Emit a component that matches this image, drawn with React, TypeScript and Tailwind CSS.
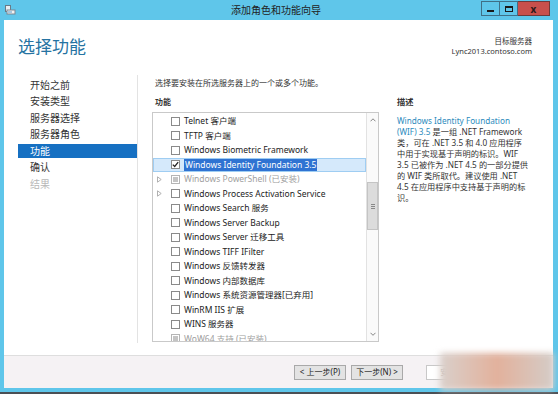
import React from "react";

type Feature = {
  label: string;
  checked?: boolean;
  selected?: boolean;
  expandable?: boolean;
  installed?: boolean;
};

const features: Feature[] = [
  { label: "Telnet 客户端" },
  { label: "TFTP 客户端" },
  { label: "Windows Biometric Framework" },
  { label: "Windows Identity Foundation 3.5", checked: true, selected: true },
  { label: "Windows PowerShell (已安装)", expandable: true, installed: true },
  { label: "Windows Process Activation Service", expandable: true },
  { label: "Windows Search 服务" },
  { label: "Windows Server Backup" },
  { label: "Windows Server 迁移工具" },
  { label: "Windows TIFF IFilter" },
  { label: "Windows 反馈转发器" },
  { label: "Windows 内部数据库" },
  { label: "Windows 系统资源管理器[已弃用]" },
  { label: "WinRM IIS 扩展" },
  { label: "WINS 服务器" },
  { label: "WoW64 支持 (已安装)", installed: true },
];

const navItems = ["开始之前", "安装类型", "服务器选择", "服务器角色", "功能", "确认", "结果"];

const descLines = [
  "3.5 已被作为 .NET 4.5 的一部分提供",
  "的 WIF 类所取代。建议使用 .NET",
  "4.5 在应用程序中支持基于声明的标",
  "识。",
];

const TitleBar = () => (
  <div className="h-[20px] flex items-start shrink-0">
    <div className="w-[77px] h-[20px] flex items-center pl-[5px]">
      <svg width="11" height="10" viewBox="0 0 11 10">
        <rect x="0.5" y="0.5" width="5" height="6" fill="#e8eef2" stroke="#6a7a86" />
        <rect x="2" y="5" width="8" height="4" fill="#f2f2f2" stroke="#7b8894" />
        <rect x="3" y="6.5" width="4" height="1" fill="#5a9ed0" />
      </svg>
    </div>
    <div className="flex-1 h-[20px] flex items-center justify-center pr-[6px] text-[10px] text-[#222]">
      添加角色和功能向导
    </div>
    <div className="w-[77px] flex items-start pt-[1px]">
      <div className="w-[19px] h-[15px] border border-[#3f6f86] flex items-end justify-center pb-[3px]">
        <div className="w-[7px] h-[2px] bg-[#1a1a1a]" />
      </div>
      <div className="w-[18px] h-[15px] border border-l-0 border-[#3f6f86] flex items-center justify-center">
        <div className="w-[8px] h-[6px] border border-t-2 border-[#1a1a1a]" />
      </div>
      <div className="w-[32px] h-[15px] bg-[#c8504c] border border-l-0 border-[#6e3a3a] flex items-center justify-center text-[10px] font-bold text-[#2b1a1a] leading-none">
        x
      </div>
    </div>
  </div>
);

const Checkbox = ({ checked, installed }: { checked?: boolean; installed?: boolean }) => (
  <div
    className={`w-[9px] h-[9px] shrink-0 border flex items-center justify-center ${
      installed ? "border-[#b5b5b5] bg-white" : "border-[#8a8a8a] bg-white"
    }`}
  >
    {installed && <div className="w-[5px] h-[5px] bg-[#c4c4c4]" />}
    {checked && (
      <svg width="7" height="7" viewBox="0 0 7 7">
        <path d="M0.8 3.6 L2.7 5.5 L6.2 1.2" fill="none" stroke="#222" strokeWidth="1.3" />
      </svg>
    )}
  </div>
);

const Arrow = () => (
  <svg width="5" height="7" viewBox="0 0 5 7">
    <path d="M0.5 0.8 L4.2 3.5 L0.5 6.2 Z" fill="none" stroke="#a8a8a8" strokeWidth="0.9" />
  </svg>
);

const FeatureRow = ({ f }: { f: Feature }) => (
  <div
    className={`h-[14.5px] shrink-0 flex items-center pl-[3px] border ${
      f.selected ? "bg-[#d5e9fb] border-[#9fcdf2]" : "border-transparent"
    }`}
  >
    <div className="w-[14px] flex items-center">{f.expandable && <Arrow />}</div>
    <Checkbox checked={f.checked} installed={f.installed} />
    <span
      className={`ml-[4px] text-[8.5px] leading-[12px] whitespace-nowrap ${
        f.selected ? "bg-[#2f73d2] text-white px-[1px]" : f.installed ? "text-[#a0a0a0]" : "text-[#222]"
      }`}
    >
      {f.label}
    </span>
  </div>
);

const Scrollbar = () => (
  <div className="w-[12px] flex flex-col border-l border-[#e2e2e2] bg-[#fafafa]">
    <div className="h-[14px] flex items-center justify-center">
      <svg width="6" height="4" viewBox="0 0 6 4">
        <path d="M0.5 3.3 L3 0.8 L5.5 3.3" fill="none" stroke="#777" strokeWidth="0.9" />
      </svg>
    </div>
    <div className="flex-1 flex flex-col">
      <div className="h-[55px]" />
      <div className="h-[48px] bg-[#dcdcdc] border border-[#c4c4c4] flex items-center justify-center">
        <div className="flex flex-col gap-[1px]">
          <div className="w-[4px] h-[1px] bg-[#888]" />
          <div className="w-[4px] h-[1px] bg-[#888]" />
          <div className="w-[4px] h-[1px] bg-[#888]" />
        </div>
      </div>
    </div>
    <div className="h-[14px] flex items-center justify-center">
      <svg width="6" height="4" viewBox="0 0 6 4">
        <path d="M0.5 0.8 L3 3.3 L5.5 0.8" fill="none" stroke="#777" strokeWidth="0.9" />
      </svg>
    </div>
  </div>
);

const Button = ({ label, disabled }: { label: string; disabled?: boolean }) => (
  <div
    className={`w-[52px] h-[15px] border flex items-center justify-center text-[8px] ${
      disabled ? "bg-white border-[#c8c8c8] text-[#999]" : "bg-[#e3e3e3] border-[#a9a9a9] text-[#222]"
    }`}
  >
    {label}
  </div>
);

export default function App() {
  return (
    <div className="relative w-[558px] h-[394px] bg-[#5fc6ea] flex flex-col font-['Noto_Sans','Noto_Sans_CJK_SC',sans-serif] overflow-hidden">
      <TitleBar />
      <div className="flex-1 mx-[4px] mr-[5px] bg-white flex flex-col">
        <div className="flex-1 flex flex-col">
          <div className="h-[55px] flex justify-between pl-[14px] pr-[21px] pt-[15px]">
            <div className="text-[17px] leading-[24px] text-[#2673a2]">选择功能</div>
            <div className="flex flex-col items-end pt-[1px] text-[7.5px] leading-[10px] text-[#333]">
              <span>目标服务器</span>
              <span>Lync2013.contoso.com</span>
            </div>
          </div>
          <div className="flex-1 flex">
            <div className="w-[134px] border-r border-[#e3e3e3] mb-[12px] pl-[14px] pt-[3px] flex flex-col gap-[2.5px]">
              {navItems.map((n, i) => (
                <div
                  key={n}
                  className={`h-[14px] pl-[12px] flex items-center text-[10px] ${
                    i === 4 ? "bg-[#1670c2] text-white" : i === 6 ? "text-[#b8b8b8]" : "text-[#333]"
                  }`}
                >
                  {n}
                </div>
              ))}
            </div>
            <div className="flex-1 flex flex-col pl-[14px] pt-[2px]">
              <div className="pl-[3px] text-[8px] leading-[12px] text-[#333]">
                选择要安装在所选服务器上的一个或多个功能。
              </div>
              <div className="flex gap-[18px] mt-[7px]">
                <div className="w-[227px] flex flex-col">
                  <div className="pl-[3px] text-[8px] leading-[12px] font-semibold text-[#333]">功能</div>
                  <div className="mt-[4px] h-[230px] border border-[#c9c9c9] flex overflow-hidden">
                    <div className="flex-1 flex flex-col pt-[1px] overflow-hidden">
                      {features.map((f) => (
                        <FeatureRow key={f.label} f={f} />
                      ))}
                    </div>
                    <Scrollbar />
                  </div>
                </div>
                <div className="flex-1 flex flex-col text-[8.2px] leading-[11px] text-[#333]">
                  <div className="leading-[12px] font-semibold">描述</div>
                  <div className="mt-[7px] whitespace-nowrap">
                    <div className="text-[#2c8bbd]">Windows Identity Foundation</div>
                    <div>
                      <span className="text-[#2c8bbd]">(WIF) 3.5</span> 是一组 .NET Framework
                    </div>
                    <div>类，可在 .NET 3.5 和 4.0 应用程序</div>
                    <div>中用于实现基于声明的标识。WIF</div>
                    {descLines.map((l) => (
                      <div key={l}>{l}</div>
                    ))}
                  </div>
                </div>
              </div>
            </div>
          </div>
        </div>
        <div className="h-[33px] shrink-0 border-t border-[#dedede] bg-[#f5f2f4] flex items-center pl-[290px] gap-[5px]">
          <Button label="< 上一步(P)" />
          <Button label="下一步(N) >" />
          <div className="ml-[18px]">
            <Button label="安装(I)" disabled />
          </div>
          <Button label="取消" />
        </div>
      </div>
      <div className="h-[6px] shrink-0 flex flex-col">
        <div className="h-[4px]" />
        <div className="h-[2px] bg-[#4a4f55]" />
      </div>
      <div className="absolute left-[440px] top-[353px] w-[114px] h-[37px] blur-[3px] bg-gradient-to-r from-[#d9d0cb] via-[#e2b19c] to-[#d4ccc7]" />
    </div>
  );
}
